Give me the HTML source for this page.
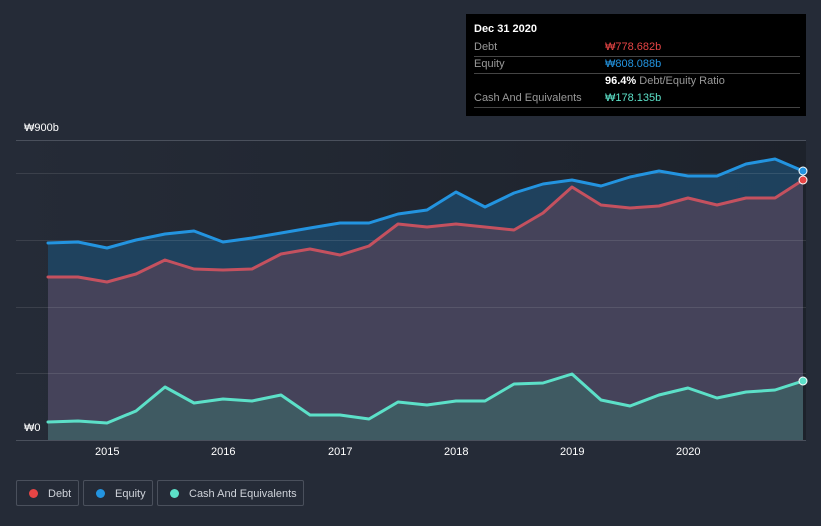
<!DOCTYPE html>
<html><head><style>
body{margin:0;width:821px;height:526px;background:#252b37;font-family:"Liberation Sans","Noto Sans CJK KR",sans-serif;overflow:hidden;position:relative}
.tt{position:absolute;left:466px;top:14px;width:340px;height:102px;background:#000;color:#fff;font-size:11px}
.tt .r{position:absolute;left:8px;right:6px;border-bottom:1px solid #444;height:17px;line-height:17px;color:#999}
.tt .v{position:absolute;left:131px}
.leg{position:absolute;top:480px;height:26px;border:1px solid #4a505c;border-radius:2px;color:#cfd3da;font-size:11px;line-height:26px;box-sizing:border-box;white-space:nowrap}
.leg i{display:inline-block;width:9px;height:9px;border-radius:50%;margin:0 10px 0 12px;vertical-align:-1px}
.ax{position:absolute;color:#fff;font-size:11px}
</style></head><body>
<svg width="821" height="526" style="position:absolute;left:0;top:0">
<defs><linearGradient id="bg" x1="0" x2="1"><stop offset="0" stop-color="#252b37"/><stop offset="1" stop-color="#1d222b"/></linearGradient></defs>
<rect x="16" y="140" width="790" height="300" fill="url(#bg)"/>
<polygon fill="#1f4563" opacity="0.9" points="48,440 48,243 78,242 107,248 136,240 165,234 194,231 223,242 252,238 281,233 310,228 340,223 369,223 398,214 427,210 456,192 485,207 514,193 543,184 572,180 601,186 630,177 659,171 688,176 717,176 746,164 775,159 803,171 803,440"/>
<polygon fill="#45435a" points="48,440 48,277 78,277 107,282 136,274 165,260 194,269 223,270 252,269 281,254 310,249 340,255 369,246 398,224 427,227 456,224 485,227 514,230 543,213 572,187 601,205 630,208 659,206 688,198 717,205 746,198 775,198 803,180 803,440"/>
<polygon fill="#3f5a62" points="48,440 48,422 78,421 107,423 136,411 165,387 194,403 223,399 252,401 281,395 310,415 340,415 369,419 398,402 427,405 456,401 485,401 514,384 543,383 572,374 601,400 630,406 659,395 688,388 717,398 746,392 775,390 803,381 803,440"/>
<g stroke="rgba(255,255,255,0.1)" stroke-width="1">
<line x1="16" x2="806" y1="140.5" y2="140.5" stroke="#4a505c"/><line x1="16" x2="806" y1="173.5" y2="173.5"/><line x1="16" x2="806" y1="240.5" y2="240.5"/><line x1="16" x2="806" y1="307.5" y2="307.5"/><line x1="16" x2="806" y1="373.5" y2="373.5"/><line x1="16" x2="806" y1="440.5" y2="440.5" stroke="#4a505c"/></g>
<g fill="none" stroke-width="3" stroke-linejoin="round" stroke-linecap="round">
<polyline stroke="#2394e0" points="48,243 78,242 107,248 136,240 165,234 194,231 223,242 252,238 281,233 310,228 340,223 369,223 398,214 427,210 456,192 485,207 514,193 543,184 572,180 601,186 630,177 659,171 688,176 717,176 746,164 775,159 803,171"/>
<polyline stroke="#c4515f" points="48,277 78,277 107,282 136,274 165,260 194,269 223,270 252,269 281,254 310,249 340,255 369,246 398,224 427,227 456,224 485,227 514,230 543,213 572,187 601,205 630,208 659,206 688,198 717,205 746,198 775,198 803,180"/>
<polyline stroke="#5ce0c8" points="48,422 78,421 107,423 136,411 165,387 194,403 223,399 252,401 281,395 310,415 340,415 369,419 398,402 427,405 456,401 485,401 514,384 543,383 572,374 601,400 630,406 659,395 688,388 717,398 746,392 775,390 803,381"/>
</g>
<circle cx="803" cy="171" r="4" fill="#2394e0" stroke="#fff" stroke-width="1"/>
<circle cx="803" cy="180" r="4" fill="#e64545" stroke="#fff" stroke-width="1"/>
<circle cx="803" cy="381" r="4" fill="#5ce0c8" stroke="#fff" stroke-width="1"/>
</svg>
<div class="ax" style="left:24px;top:122px">₩900b</div>
<div class="ax" style="left:24px;top:422px">₩0</div>
<div class="ax" style="left:95px;top:446px">2015</div>
<div class="ax" style="left:211px;top:446px">2016</div>
<div class="ax" style="left:328px;top:446px">2017</div>
<div class="ax" style="left:444px;top:446px">2018</div>
<div class="ax" style="left:560px;top:446px">2019</div>
<div class="ax" style="left:676px;top:446px">2020</div>
<div class="tt">
<div style="position:absolute;left:8px;top:9px;font-weight:bold;font-size:11px">Dec 31 2020</div>
<div class="r" style="top:25px">Debt<span class="v" style="color:#e64545">₩778.682b</span></div>
<div class="r" style="top:42px">Equity<span class="v" style="color:#2394e0">₩808.088b</span></div>
<div class="r" style="top:59px;border:none"><span class="v"><b style="color:#fff">96.4%</b> Debt/Equity Ratio</span></div>
<div class="r" style="top:76px">Cash And Equivalents<span class="v" style="color:#5ce0c8">₩178.135b</span></div>
</div>
<div class="leg" style="left:16px;width:63px"><i style="background:#e64545"></i>Debt</div>
<div class="leg" style="left:83px;width:70px"><i style="background:#2394e0"></i>Equity</div>
<div class="leg" style="left:157px;width:147px"><i style="background:#5ce0c8"></i>Cash And Equivalents</div>
</body></html>
